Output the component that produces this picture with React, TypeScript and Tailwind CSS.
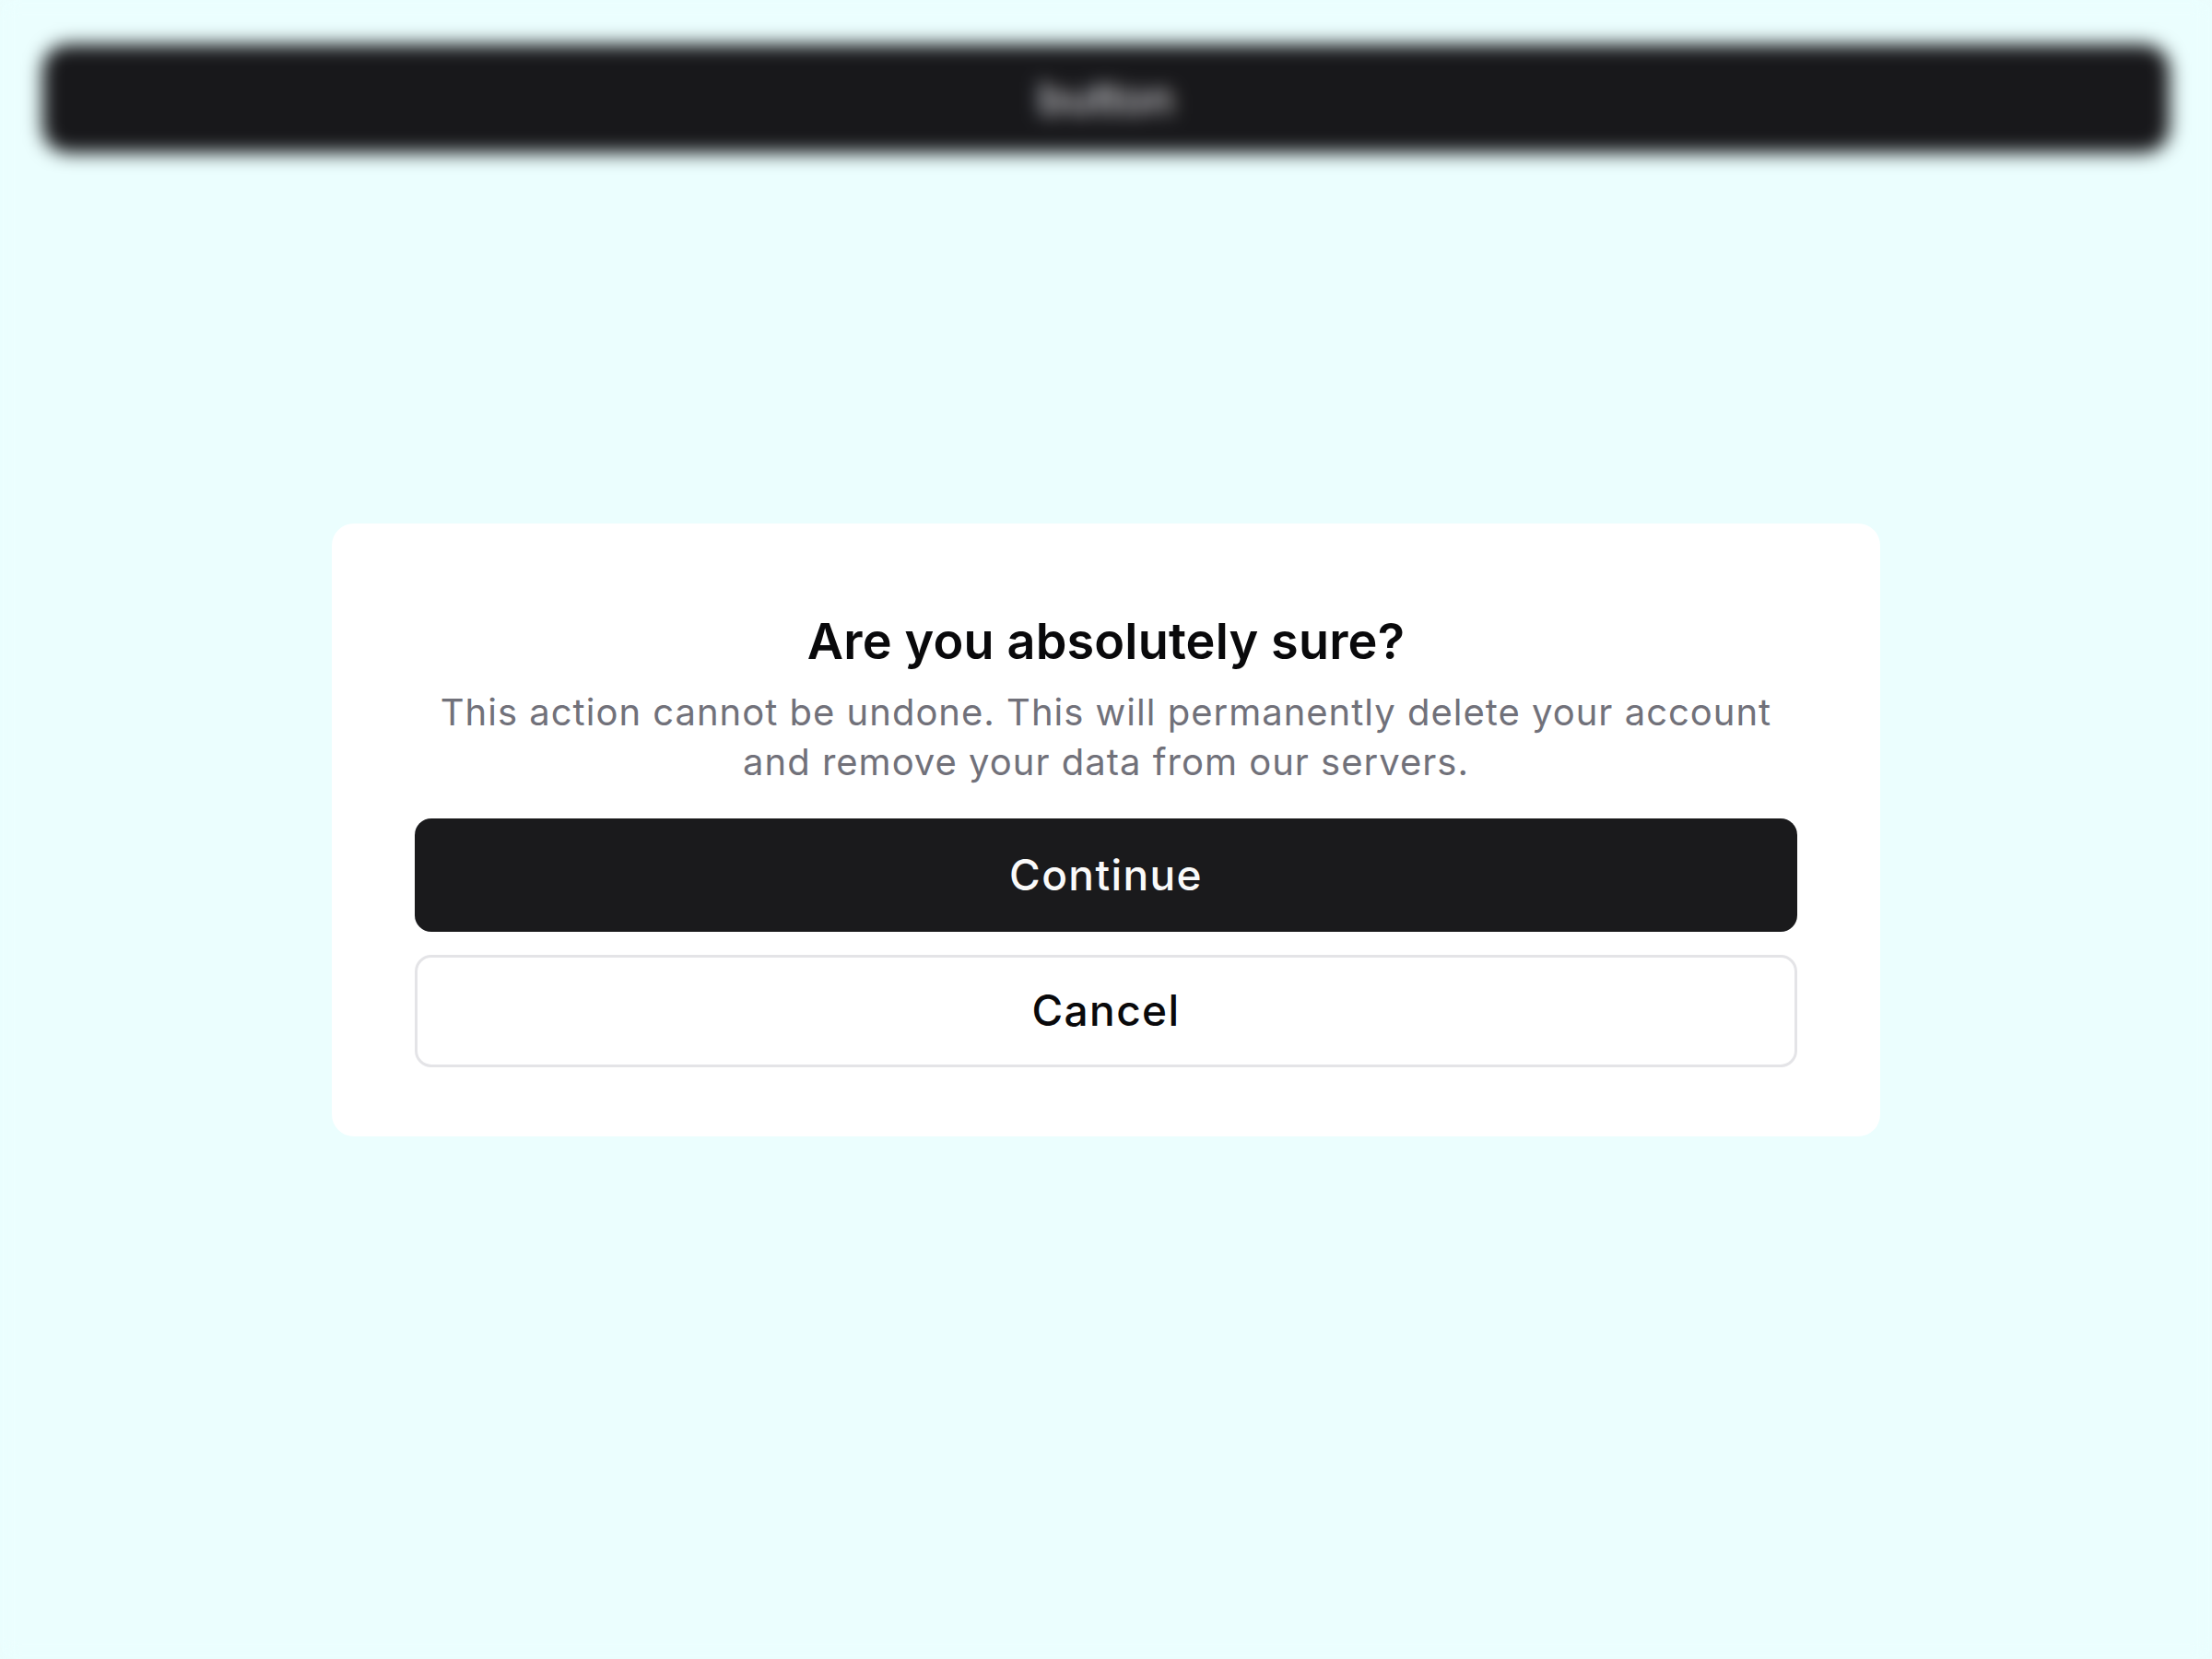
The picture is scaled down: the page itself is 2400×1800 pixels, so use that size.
import React from "react";

export default function App() {
  return (
    <div
      className="min-h-screen w-full bg-[#ebfefe] px-[46px] pt-[48px]"
      style={{ fontFamily: "Inter, 'Noto Sans', sans-serif" }}
    >
      <button className="flex h-[118px] w-full items-center justify-center rounded-[28px] bg-[#18181b] text-[48px] font-medium text-zinc-300">
        button
      </button>

      {/* alert dialog */}
      <div className="fixed inset-0 z-50 flex items-center justify-center backdrop-blur-[10px]">
        <div
          role="alertdialog"
          className="flex w-[1680px] flex-col rounded-[24px] bg-white px-[90px] pb-[75px] pt-[88px]"
        >
          <div className="flex flex-col items-center gap-[10px] text-center">
            <h2 className="text-[54px] font-semibold leading-[80px] tracking-[0.003em] text-[#09090b]">
              Are you absolutely sure?
            </h2>
            <p className="text-[40px] leading-[54px] tracking-[0.025em] text-[#71717a]">
              This action cannot be undone. This will permanently delete your
              account and remove your data from our servers.
            </p>
          </div>

          <div className="mt-[34px] flex flex-col gap-[25px]">
            <button className="h-[123px] w-full rounded-[18px] bg-[#1a1a1c] text-[46px] font-medium tracking-[0.03em] text-[#fafafa]">
              Continue
            </button>
            <button className="h-[122px] w-full rounded-[18px] border-[3px] border-[#e4e4e7] bg-white text-[46px] font-medium tracking-[0.03em] text-[#09090b]">
              Cancel
            </button>
          </div>
        </div>
      </div>
    </div>
  );
}
